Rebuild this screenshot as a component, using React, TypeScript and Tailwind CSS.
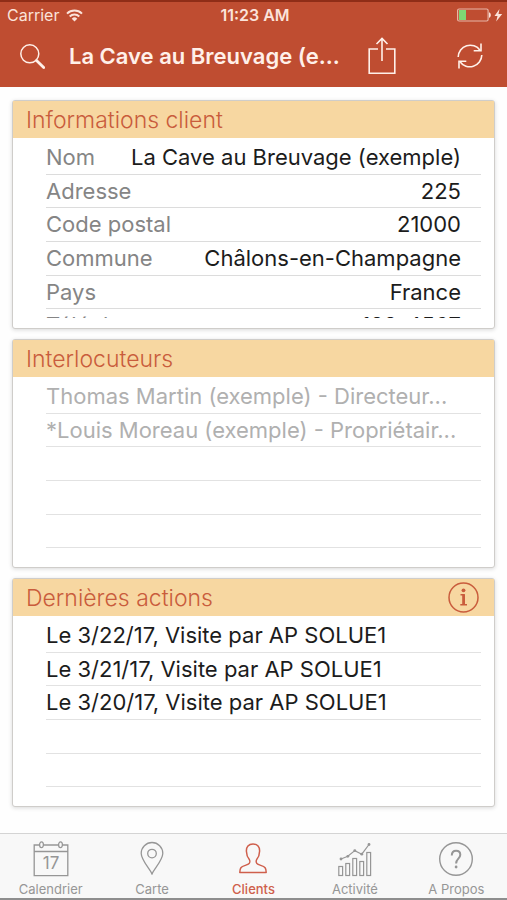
import React from 'react';

const ACTIVE_TAB = 'Clients';

const clientInfo = [
    { label: 'Nom', value: 'La Cave au Breuvage (exemple)' },
    { label: 'Adresse', value: '225' },
    { label: 'Code postal', value: '21000' },
    { label: 'Commune', value: 'Châlons-en-Champagne' },
    { label: 'Pays', value: 'France' },
    { label: 'Téléphone', value: '123-4567' },
];

const contacts = [
    'Thomas Martin (exemple) - Directeur...',
    '*Louis Moreau (exemple) - Propriétair...',
    '',
    '',
    '',
    '',
];

const actions = [
    'Le 3/22/17, Visite par AP SOLUE1',
    'Le 3/21/17, Visite par AP SOLUE1',
    'Le 3/20/17, Visite par AP SOLUE1',
    '',
    '',
    '',
];

const CalendarIcon = () => (
    <svg width="36" height="36" viewBox="0 0 36 36" fill="none" stroke="currentColor" strokeWidth="1.3">
        <path d="M6.5 4H1.2v30.6h33.6V4h-5.3M10.5 4h15M1.2 10.5h33.6" />
        <ellipse cx="8.5" cy="3.8" rx="1.9" ry="2.9" />
        <ellipse cx="27.5" cy="3.8" rx="1.9" ry="2.9" />
        <text x="18" y="28" textAnchor="middle" fontSize="17" fontFamily="Inter, sans-serif" fill="currentColor" stroke="none">17</text>
    </svg>
);

const PinIcon = () => (
    <svg width="36" height="36" viewBox="0 0 36 36" fill="none" stroke="currentColor" strokeWidth="1.3">
        <path d="M18 33.2C16.5 28.5 7.2 19.5 7.2 12.3a10.8 10.8 0 0 1 21.6 0C28.8 19.5 19.5 28.5 18 33.2z" strokeLinejoin="round" />
        <circle cx="18" cy="12.6" r="4.3" />
    </svg>
);

const ClientIcon = () => (
    <svg width="36" height="36" viewBox="0 0 36 36" fill="none" stroke="currentColor" strokeWidth="1.5" strokeLinejoin="round">
        <path d="M18 3c-4.5 0-6.8 3-6.6 7.2.1 3.6 1.2 6.3 2.9 8.3.9 1.6.6 3.8-1 4.7-2.1 1.2-6 1.8-7.4 3.5-1 1.3-1.1 3-1.1 4.8h26.4c0-1.8-.1-3.5-1.1-4.8-1.4-1.7-5.3-2.3-7.4-3.5-1.6-.9-1.9-3.1-1-4.7 1.7-2 2.8-4.7 2.9-8.3.2-4.2-2.1-7.2-6.6-7.2z" />
    </svg>
);

const ActivityIcon = () => (
    <svg width="36" height="36" viewBox="0 0 36 36" fill="none" stroke="currentColor" strokeWidth="1.2">
        <rect x="1.8" y="25.5" width="3.8" height="9" />
        <rect x="8.8" y="22.5" width="3.8" height="12" />
        <rect x="15.8" y="17.5" width="3.8" height="17" />
        <rect x="22.8" y="20.5" width="3.8" height="14" />
        <rect x="29.8" y="11.5" width="3.8" height="23" />
        <path d="M4 18l6.8-2.7 7-5.7 7 3.6L32 3.5" />
        <g fill="currentColor" stroke="none">
            <circle cx="4" cy="18" r="1.4" />
            <circle cx="10.8" cy="15.3" r="1.4" />
            <circle cx="17.8" cy="9.6" r="1.4" />
            <circle cx="24.8" cy="13.2" r="1.4" />
            <circle cx="32" cy="3.5" r="1.4" />
        </g>
    </svg>
);

const HelpIcon = () => (
    <svg width="36" height="36" viewBox="0 0 36 36" fill="none" stroke="currentColor" strokeWidth="1.4">
        <circle cx="18" cy="18" r="16.3" />
        <path d="M13.8 14.6c0-3 1.7-4.9 4.3-4.9 2.5 0 4.2 1.7 4.2 4.1 0 3.9-4.2 3.9-4.2 8.7" strokeWidth="2" />
        <circle cx="18.1" cy="26" r="1.4" fill="currentColor" stroke="none" />
    </svg>
);

const tabs = [
    { label: 'Calendrier', icon: CalendarIcon },
    { label: 'Carte', icon: PinIcon },
    { label: 'Clients', icon: ClientIcon },
    { label: 'Activité', icon: ActivityIcon },
    { label: 'A Propos', icon: HelpIcon },
];

const StatusBar = () => (
    <div className="grid grid-cols-3 items-center h-[26px] pl-[7px] pr-1 text-[#fbe3da]">
        <div className="flex items-center gap-[7px] text-base">
            <span>Carrier</span>
            <svg width="17" height="13" viewBox="0 0 17 13" fill="none" stroke="currentColor" strokeWidth="2">
                <path d="M1 4.6a10.8 10.8 0 0 1 15 0M3.7 7.5a7 7 0 0 1 9.6 0" />
                <path d="M8.5 12.5L5.7 9.7a4 4 0 0 1 5.6 0z" fill="currentColor" stroke="none" />
            </svg>
        </div>
        <span className="text-center text-base font-semibold">11:23 AM</span>
        <div className="flex items-center justify-end">
            <svg width="46" height="14" viewBox="0 0 46 14">
                <rect x="0.6" y="1" width="30.5" height="12" rx="1.5" fill="none" stroke="currentColor" strokeOpacity="0.7" strokeWidth="1.2" />
                <rect x="2" y="2" width="7" height="10" fill="#7fd673" />
                <path d="M32 4.2c2.4.6 2.4 5 0 5.6z" fill="currentColor" />
                <path d="M42.5 1L37.5 8h3L39.2 13.5l6-7.5h-3.7z" fill="currentColor" />
            </svg>
        </div>
    </div>
);

const Header = () => (
    <header className="h-[87px] border-t-2 border-[#8f2d17] bg-[#bf4d31] text-[#fff0e9]">
        <StatusBar />
        <div className="flex items-center h-14 pl-5 pr-6">
            <button type="button" aria-label="Rechercher" className="shrink-0">
                <svg width="25" height="25" viewBox="0 0 25 25" fill="none" stroke="currentColor">
                    <circle cx="9.8" cy="9.8" r="9" strokeWidth="1.5" />
                    <path d="M16.5 16.5l7.2 7" strokeWidth="2.8" strokeLinecap="round" />
                </svg>
            </button>
            <h1 className="ml-6 text-[22px] leading-7 font-semibold whitespace-nowrap">La Cave au Breuvage (e...</h1>
            <div className="flex flex-1 items-center justify-between pl-7">
                <button type="button" aria-label="Partager">
                    <svg width="28" height="38" viewBox="0 0 28 38" fill="none" stroke="currentColor" strokeWidth="1.6">
                        <path d="M10 12H1.2v24.2h25.6V12H18M14 24V2M8.5 7L14 1.5 19.5 7" />
                    </svg>
                </button>
                <button type="button" aria-label="Actualiser">
                    <svg width="26" height="28" viewBox="0 0 26 28" fill="none" stroke="currentColor" strokeWidth="1.6">
                        <path d="M1.2 15A12 12 0 0 1 23 8.3M24.8 13A12 12 0 0 1 3 19.7" />
                        <path d="M24 1.5v7.3h-7.3M2 26.5v-7.3h7.3" />
                    </svg>
                </button>
            </div>
        </div>
    </header>
);

interface CardProps {
    title: string;
    action?: React.ReactNode;
    children: React.ReactNode;
}

const Card = ({ title, action, children }: CardProps) => (
    <section className="pb-[10px] bg-white border border-[#cfcdca] rounded-[3px] shadow-[0_1px_4px_rgba(0,0,0,0.15)]">
        <div className="flex items-center justify-between h-[37px] pl-[13px] pr-[15px] bg-[#f7d7a1] text-[#c95c3c]">
            <h2 className="text-[23px] leading-7 font-light">{title}</h2>
            {action}
        </div>
        <div className="h-[180px] pt-[3px] pl-[33px] pr-[13px] overflow-hidden">{children}</div>
    </section>
);

const TextList = ({ items, className }: { items: string[]; className: string }) => (
    <ul className={`grid auto-rows-fr h-[202px] text-[22px] leading-8 ${className}`}>
        {items.map((item, i) => (
            <li key={i} className="border-b border-[#e2e2e2] whitespace-nowrap">{item}</li>
        ))}
    </ul>
);

const TabBar = () => (
    <nav className="grid grid-cols-5 h-[67px] border-t border-t-[#d4d4d4] border-b-2 border-b-[#8e8e8e] bg-[#f8f8f8]">
        {tabs.map(({ label, icon: Icon }) => (
            <a
                key={label}
                href="#"
                className={`flex flex-col items-center pt-[7px] text-[13px] leading-4 ${label === ACTIVE_TAB ? 'text-[#cf5f4c] font-medium' : 'text-[#969696]'}`}
            >
                <Icon />
                <span className="mt-1">{label}</span>
            </a>
        ))}
    </nav>
);

export default function App() {
    return (
        <div className="flex flex-col min-h-screen bg-[#fefefe] font-['Inter',sans-serif]">
            <Header />
            <main className="flex flex-col flex-1 gap-[10px] px-3 pt-[13px]">
                <Card title="Informations client">
                    <dl className="grid auto-rows-fr h-[202px] text-[22px] leading-8">
                        {clientInfo.map(({ label, value }) => (
                            <div key={label} className="flex justify-between pr-5 border-b border-[#dcdcdc] whitespace-nowrap">
                                <dt className="text-[#858585]">{label}</dt>
                                <dd className="text-[#1c1c1c]">{value}</dd>
                            </div>
                        ))}
                    </dl>
                </Card>
                <Card title="Interlocuteurs">
                    <TextList items={contacts} className="text-[#b0b0b0]" />
                </Card>
                <Card
                    title="Dernières actions"
                    action={
                        <button type="button" aria-label="Informations">
                            <svg width="31" height="31" viewBox="0 0 31 31" fill="none" stroke="currentColor">
                                <circle cx="15.5" cy="15.5" r="14.5" strokeWidth="1.5" />
                                <circle cx="15.5" cy="8.3" r="1.9" fill="currentColor" stroke="none" />
                                <path d="M12.5 12.7h3.3v10M12.3 22.8h6.7" strokeWidth="1.4" />
                                <path d="M15.6 12.2v10.5" strokeWidth="2.8" />
                            </svg>
                        </button>
                    }
                >
                    <TextList items={actions} className="text-[#1c1c1c]" />
                </Card>
            </main>
            <TabBar />
        </div>
    );
}
